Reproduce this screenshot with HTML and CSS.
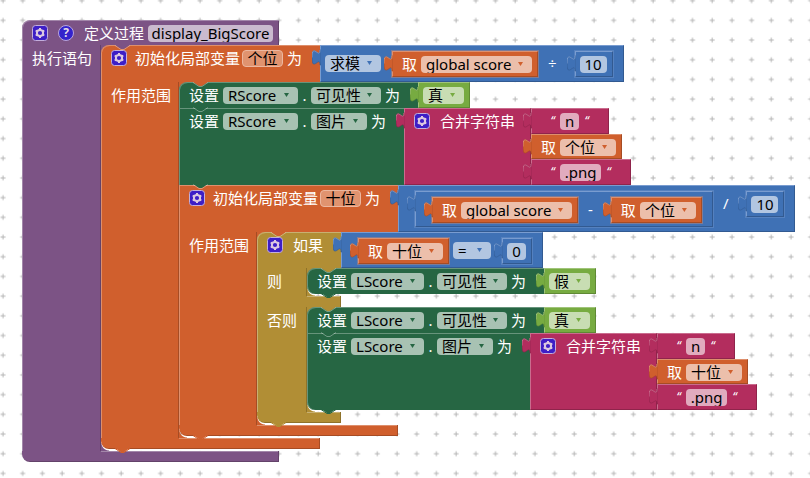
FILE: index.html
```
<!DOCTYPE html>
<html lang="zh-CN">
<head>
<meta charset="utf-8">
<meta name="viewport" content="width=device-width, initial-scale=1">
<title>display_BigScore</title>
<link rel="stylesheet" href="styles.css">
</head>
<body>
<svg class="grid" aria-hidden="true">
  <defs>
    <pattern id="plus" x="-7" y="-9.2" width="19.7" height="19.7" patternUnits="userSpaceOnUse">
      <path d="M7.5 9.85h5M10 7.35v5" stroke="#b4b4b4" stroke-width="1" fill="none"/>
    </pattern>
    <symbol id="tab" viewBox="0 0 9 26">
      <path class="tab-fill" d="M9 5H8c0 10-8-8-8 7.5s8-2.5 8 7.5h1z"/>
      <path class="tab-light" d="M8 5c0 10-8-8-8 7.5"/>
    </symbol>
    <symbol id="notch" viewBox="0 0 15 6">
      <path class="notch-fill" d="M0 0l6 4h3l6-4z"/>
      <path class="notch-line" d="M0 .5l6 4h3l6-4"/>
    </symbol>
    <symbol id="gear" viewBox="0 0 16 16">
      <rect class="icon-bg" x=".5" y=".5" width="15" height="15" rx="3"/>
      <circle class="icon-mark" cx="8" cy="8" r="3.1"/>
      <path class="icon-mark" d="M8 4.900V3M8 11.100V13M10.700 6.450l1.600-.95M5.300 9.550l-1.600.95M10.700 9.550l1.600.95M5.300 6.450l-1.600-.95"/>
    </symbol>
  </defs>
  <rect width="100%" height="100%" fill="url(#plus)"/>
</svg>

<main class="workspace">
  <section class="block purple root">
    <div class="head">
      <div class="main">
        <button class="icon" type="button" aria-label="设置"><svg><use href="#gear"/></svg></button>
        <button class="icon help" type="button">?</button>
        <label for="proc">定义过程</label>
        <input class="field w-proc" id="proc" value="display_BigScore">
      </div>
    </div>
    <div class="body">
      <div class="arm">执行语句</div>
      <div class="stack">
        <svg class="notch top"><use href="#notch"/></svg>

        <section class="block orange local">
          <div class="head">
            <div class="main">
              <button class="icon" type="button" aria-label="设置"><svg><use href="#gear"/></svg></button>
              <label for="v1">初始化局部变量</label>
              <input class="field name" id="v1" value="个位">
              <span>为</span>
            </div>
            <div class="value blue math">
              <svg class="tab"><use href="#tab"/></svg>
              <span class="pick w-2"><select aria-label="运算"><option>求模</option></select></span>
              <div class="value orange inline">
                <svg class="tab"><use href="#tab"/></svg>
                <label for="g1">取</label>
                <span class="pick w-global"><select id="g1"><option>global score</option></select></span>
              </div>
              <span class="op">÷</span>
              <div class="value blue inline number">
                <svg class="tab"><use href="#tab"/></svg>
                <input class="field w-10" aria-label="除数" value="10">
              </div>
            </div>
          </div>
          <div class="body">
            <div class="arm">作用范围</div>
            <div class="stack">
              <svg class="notch top"><use href="#notch"/></svg>

              <section class="block green">
                <div class="head">
                  <div class="main">
                    <label for="c1">设置</label>
                    <span class="pick w-r"><select id="c1"><option>RScore</option></select></span>
                    <span class="dot">.</span>
                    <span class="pick w-3"><select aria-label="属性"><option>可见性</option></select></span>
                    <span>为</span>
                  </div>
                  <div class="value lime">
                    <svg class="tab"><use href="#tab"/></svg>
                    <span class="pick w-1"><select aria-label="值"><option>真</option></select></span>
                  </div>
                </div>
                <svg class="notch"><use href="#notch"/></svg>
              </section>

              <section class="block green">
                <div class="head">
                  <div class="main">
                    <label for="c2">设置</label>
                    <span class="pick w-r"><select id="c2"><option>RScore</option></select></span>
                    <span class="dot">.</span>
                    <span class="pick w-2"><select aria-label="属性"><option>图片</option></select></span>
                    <span>为</span>
                  </div>
                  <div class="value pink join">
                    <svg class="tab"><use href="#tab"/></svg>
                    <button class="icon" type="button" aria-label="设置"><svg><use href="#gear"/></svg></button>
                    <span>合并字符串</span>
                  </div>
                  <div class="parts">
                    <div class="value pink text">
                      <svg class="tab"><use href="#tab"/></svg>
                      <span class="quote">“</span><input class="field w-n" aria-label="文本" value="n"><span class="quote">“</span>
                    </div>
                    <div class="value orange">
                      <svg class="tab"><use href="#tab"/></svg>
                      <label for="g2">取</label>
                      <span class="pick w-2"><select id="g2"><option>个位</option></select></span>
                    </div>
                    <div class="value pink text">
                      <svg class="tab"><use href="#tab"/></svg>
                      <span class="quote">“</span><input class="field w-png" aria-label="文本" value=".png"><span class="quote">“</span>
                    </div>
                  </div>
                </div>
                <svg class="notch"><use href="#notch"/></svg>
              </section>

              <section class="block orange local">
                <div class="head">
                  <div class="main">
                    <button class="icon" type="button" aria-label="设置"><svg><use href="#gear"/></svg></button>
                    <label for="v2">初始化局部变量</label>
                    <input class="field name" id="v2" value="十位">
                    <span>为</span>
                  </div>
                  <div class="value blue math">
                    <svg class="tab"><use href="#tab"/></svg>
                    <div class="value blue math inline nested">
                      <svg class="tab"><use href="#tab"/></svg>
                      <div class="value orange inline">
                        <svg class="tab"><use href="#tab"/></svg>
                        <label for="g3">取</label>
                        <span class="pick w-global"><select id="g3"><option>global score</option></select></span>
                      </div>
                      <span class="op">-</span>
                      <div class="value orange inline">
                        <svg class="tab"><use href="#tab"/></svg>
                        <label for="g4">取</label>
                        <span class="pick w-2"><select id="g4"><option>个位</option></select></span>
                      </div>
                    </div>
                    <span class="op">/</span>
                    <div class="value blue inline number">
                      <svg class="tab"><use href="#tab"/></svg>
                      <input class="field w-10" aria-label="除数" value="10">
                    </div>
                  </div>
                </div>
                <div class="body">
                  <div class="arm">作用范围</div>
                  <div class="stack">
                    <svg class="notch top"><use href="#notch"/></svg>

                    <section class="block gold">
                      <div class="head">
                        <div class="main">
                          <button class="icon" type="button" aria-label="设置"><svg><use href="#gear"/></svg></button>
                          <span>如果</span>
                        </div>
                        <div class="value blue math nested">
                          <svg class="tab"><use href="#tab"/></svg>
                          <div class="value orange inline">
                            <svg class="tab"><use href="#tab"/></svg>
                            <label for="g5">取</label>
                            <span class="pick w-2"><select id="g5"><option>十位</option></select></span>
                          </div>
                          <span class="pick w-eq"><select aria-label="比较"><option>=</option></select></span>
                          <div class="value blue inline number">
                            <svg class="tab"><use href="#tab"/></svg>
                            <input class="field w-n" aria-label="数字" value="0">
                          </div>
                        </div>
                      </div>
                      <div class="body">
                        <div class="arm">则</div>
                        <div class="stack">
                          <svg class="notch top"><use href="#notch"/></svg>
                          <section class="block green">
                            <div class="head">
                              <div class="main">
                                <label for="c3">设置</label>
                                <span class="pick w-l"><select id="c3"><option>LScore</option></select></span>
                                <span class="dot">.</span>
                                <span class="pick w-3"><select aria-label="属性"><option>可见性</option></select></span>
                                <span>为</span>
                              </div>
                              <div class="value lime">
                                <svg class="tab"><use href="#tab"/></svg>
                                <span class="pick w-1"><select aria-label="值"><option>假</option></select></span>
                              </div>
                            </div>
                            <svg class="notch"><use href="#notch"/></svg>
                          </section>
                        </div>
                      </div>
                      <div class="foot between"></div>
                      <div class="body">
                        <div class="arm">否则</div>
                        <div class="stack">
                          <svg class="notch top"><use href="#notch"/></svg>
                          <section class="block green">
                            <div class="head">
                              <div class="main">
                                <label for="c4">设置</label>
                                <span class="pick w-l"><select id="c4"><option>LScore</option></select></span>
                                <span class="dot">.</span>
                                <span class="pick w-3"><select aria-label="属性"><option>可见性</option></select></span>
                                <span>为</span>
                              </div>
                              <div class="value lime">
                                <svg class="tab"><use href="#tab"/></svg>
                                <span class="pick w-1"><select aria-label="值"><option>真</option></select></span>
                              </div>
                            </div>
                            <svg class="notch"><use href="#notch"/></svg>
                          </section>
                          <section class="block green">
                            <div class="head">
                              <div class="main">
                                <label for="c5">设置</label>
                                <span class="pick w-l"><select id="c5"><option>LScore</option></select></span>
                                <span class="dot">.</span>
                                <span class="pick w-2"><select aria-label="属性"><option>图片</option></select></span>
                                <span>为</span>
                              </div>
                              <div class="value pink join">
                                <svg class="tab"><use href="#tab"/></svg>
                                <button class="icon" type="button" aria-label="设置"><svg><use href="#gear"/></svg></button>
                                <span>合并字符串</span>
                              </div>
                              <div class="parts">
                                <div class="value pink text">
                                  <svg class="tab"><use href="#tab"/></svg>
                                  <span class="quote">“</span><input class="field w-n" aria-label="文本" value="n"><span class="quote">“</span>
                                </div>
                                <div class="value orange">
                                  <svg class="tab"><use href="#tab"/></svg>
                                  <label for="g6">取</label>
                                  <span class="pick w-2"><select id="g6"><option>十位</option></select></span>
                                </div>
                                <div class="value pink text">
                                  <svg class="tab"><use href="#tab"/></svg>
                                  <span class="quote">“</span><input class="field w-png" aria-label="文本" value=".png"><span class="quote">“</span>
                                </div>
                              </div>
                            </div>
                            <svg class="notch"><use href="#notch"/></svg>
                          </section>
                        </div>
                      </div>
                      <div class="foot"></div>
                      <svg class="notch"><use href="#notch"/></svg>
                    </section>
                  </div>
                </div>
                <div class="foot"></div>
                <svg class="notch"><use href="#notch"/></svg>
              </section>
            </div>
          </div>
          <div class="foot"></div>
          <svg class="notch"><use href="#notch"/></svg>
        </section>
      </div>
    </div>
    <div class="foot"></div>
  </section>
</main>
</body>
</html>
```
FILE: styles.css
```
* { box-sizing: border-box; }

body {
  margin: 0;
  min-height: 100vh;
  background: #fff;
  color: #fff;
  font: 15px/17px "Noto Sans", "Noto Sans CJK SC", sans-serif;
  overflow: hidden;
}

.grid {
  position: absolute;
  inset: 0;
  width: 100%;
  height: 100%;
}

.workspace {
  position: relative;
  display: flex;
  padding: 20px 0 0 22px;
  white-space: nowrap;
}

/* Block colours: base, highlight, shadow */
.purple { --c: #7c5385; --hi: #a387aa; --lo: #63426a; }
.orange { --c: #d05f2d; --hi: #de8f6c; --lo: #a64c24; }
.blue   { --c: #3f71b5; --hi: #799cd0; --lo: #325a91; }
.green  { --c: #266643; --hi: #67947b; --lo: #1e5236; }
.lime   { --c: #77ab41; --hi: #a0c47a; --lo: #5f8934; }
.pink   { --c: #b32d5e; --hi: #ca6c8e; --lo: #8f244b; }
.gold   { --c: #b18e35; --hi: #c8b072; --lo: #8e722a; }

/* Statement blocks */
.block {
  position: relative;
  --main: auto;
  --arm: 78px;
}
.purple.block { --main: 257px; --arm: 79px; }
.local { --main: 219px; }
.gold.block { --main: 84px; --arm: 50px; }

.head, .body { display: flex; }

.main {
  display: flex;
  gap: 4px;
  width: var(--main);
  min-height: 26px;
  padding: 4px 18px 0 10px;
  background: var(--c);
  border-top: 1px solid var(--hi);
  box-shadow: inset 1px 0 var(--hi);
}
.local > .head > .main { gap: 2px; }
.purple > .head > .main {
  min-height: 25px;
  padding-right: 6px;
  box-shadow: inset 1px 0 var(--hi), inset -1px 0 var(--lo);
}
.root > .head > .main,
.stack > .notch.top + .block > .head > .main { border-top-left-radius: 8px; }

.arm {
  width: var(--arm);
  padding: 5px 0 0 10px;
  background: var(--c);
  box-shadow: inset 1px 0 var(--hi), inset -1px 0 var(--lo);
}

.stack {
  position: relative;
  padding-bottom: 2px;
  background:
    linear-gradient(var(--c), var(--c)) 0 0 / 8px 8px no-repeat,
    radial-gradient(circle at 100% 0, transparent 7px, var(--c) 8px) 0 100% / 8px 8px no-repeat;
}

.foot {
  width: var(--main);
  height: 11px;
  background:
    linear-gradient(var(--hi), var(--hi)) var(--arm) 0 / 100% 1px no-repeat,
    var(--c);
  border-bottom-left-radius: 8px;
  box-shadow: inset -1px -1px var(--lo);
}
.foot.between {
  background:
    linear-gradient(var(--hi), var(--hi)) 0 0 / 1px 100% no-repeat,
    linear-gradient(var(--hi), var(--hi)) var(--arm) 0 / 100% 1px no-repeat,
    var(--c);
  border-radius: 0;
  box-shadow: inset -1px 0 var(--lo);
}
.block:last-child > .head:nth-last-child(2) > .main { border-bottom-left-radius: 8px; }

/* Value blocks */
.value {
  position: relative;
  display: flex;
  gap: 4px;
  min-height: 26px;
  padding: 4px 5px 0 4px;
  background: var(--c);
  border: 1px solid;
  border-color: var(--hi) var(--lo) var(--lo) var(--hi);
}
.value.orange { padding-left: 9px; }
.math {
  gap: 0;
  padding: 5px 10px 4px 4px;
}
.math.nested { padding-bottom: 3px; }
.math > .inline {
  align-self: flex-start;
  margin-left: 11px;
  outline: 1px solid color-mix(in srgb, var(--hi), transparent 60%);
}
.math > .tab + .inline { margin-left: 12px; }
.math > .pick { margin: 4px 0 0 4px; }
.math > .tab + .pick { margin-left: 0; }
.op {
  margin: 4px 7px 0 10px;
  text-align: center;
}

.join { width: 127px; padding-left: 9px; }
.parts {
  display: grid;
  grid-template-rows: 26px 25px 26px;
  justify-items: start;
}
.parts > .value { min-height: 0; }
.value.text { padding: 4px 18px 0 17px; }
.quote {
  width: 7px;
  text-align: center;
  font-size: 12px;
  line-height: 15px;
  font-style: italic;
}

/* Connectors */
.tab {
  position: absolute;
  left: -9px;
  top: -1px;
  width: 9px;
  height: 26px;
  z-index: 1;
  overflow: visible;
}
.tab-fill { fill: var(--c); stroke: var(--lo); stroke-width: .6; }
.tab-light { fill: none; stroke: var(--hi); stroke-width: 1; }

.notch {
  position: absolute;
  left: 14px;
  bottom: -5px;
  width: 15px;
  height: 6px;
  z-index: 2;
}
.notch.top { top: 0; bottom: auto; }
.notch-fill { fill: var(--c); }
.notch-line { fill: none; stroke: var(--line, var(--c)); stroke-width: 1; }
.notch.top,
.block:not(:last-child) > .notch { --line: rgb(255 255 255 / 35%); }

/* Controls */
.icon {
  flex: none;
  width: 16px;
  height: 16px;
  margin-right: 6px;
  padding: 0;
  border: 0;
  background: none;
}
.icon svg { display: block; width: 16px; height: 16px; }
.icon-bg { fill: #3d1ec6; stroke: #c3aedb; stroke-width: 1; }
.icon-mark { fill: none; stroke: #dcc8e0; stroke-width: 2; }
.help {
  border: 1px solid #b9a5dc;
  border-radius: 50%;
  background: #3322cc;
  color: #e4d8ea;
  font: bold 12px/14px "Noto Sans", sans-serif;
}

.field, .pick {
  flex: none;
  height: 17px;
  border: 0;
  border-radius: 4px;
  background: rgb(255 255 255 / 60%);
  color: #000;
  font: inherit;
}
.field {
  padding: 0;
  text-align: center;
}
.name {
  width: 41px;
  margin-right: 2px;
  border: 1px solid #ecb79f;
  background: #e0936f;
}
.pick { position: relative; }
.pick select {
  display: block;
  width: 100%;
  height: 17px;
  padding: 0 0 0 5px;
  border: 0;
  background: none;
  color: #000;
  font: inherit;
  appearance: none;
}
.pick::after {
  content: "";
  position: absolute;
  right: 9px;
  top: 6px;
  width: 5px;
  height: 4px;
  background: var(--c);
  clip-path: polygon(0 0, 100% 0, 50% 100%);
  pointer-events: none;
}
.dot { width: 5px; text-align: center; }

.w-proc { width: 125px; }
.w-global { width: 111px; }
.w-r { width: 75px; }
.w-l { width: 73px; }
.w-3 { width: 70px; }
.w-2 { width: 56px; }
.w-1 { width: 41px; }
.w-eq { width: 38px; }
.w-10 { width: 27px; }
.w-n { width: 19px; }
.w-png { width: 41px; }
```
